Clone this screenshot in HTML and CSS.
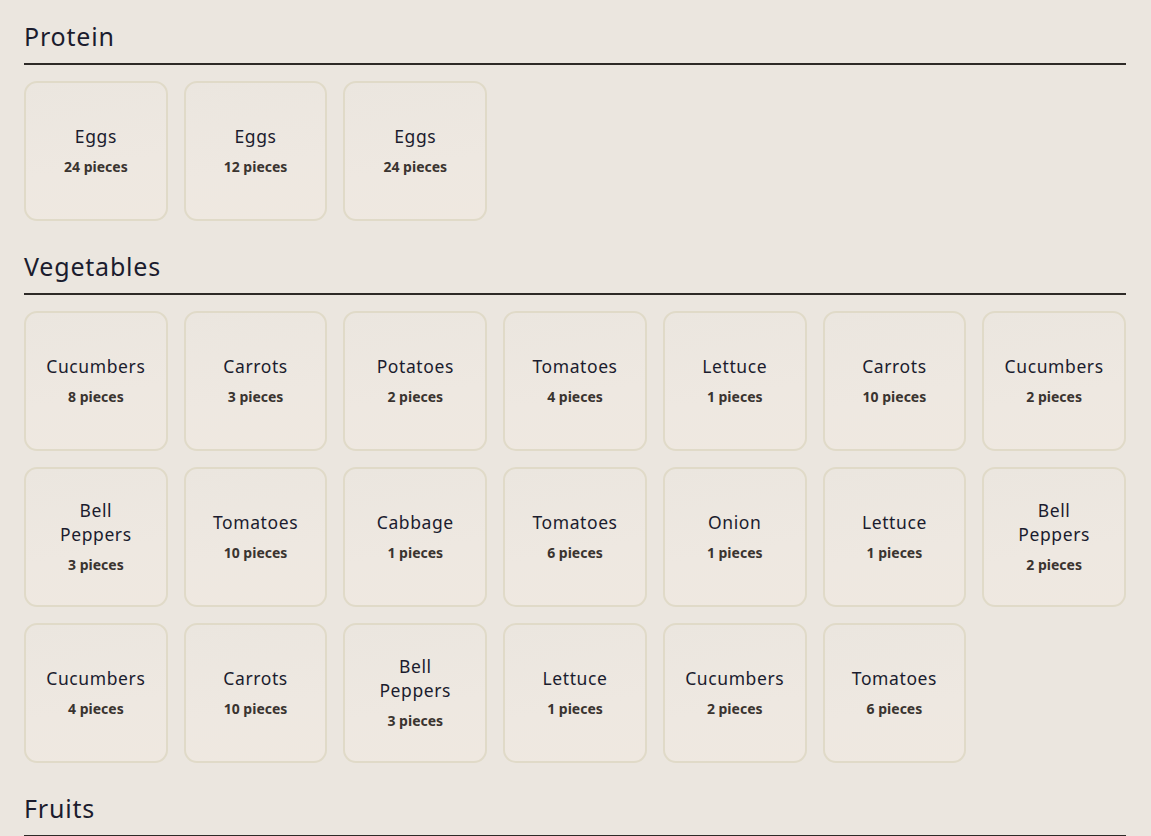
FILE: index.html
```html
<!DOCTYPE html>
<html lang="en">
<head>
<meta charset="utf-8">
<title>Pantry</title>
<link rel="stylesheet" href="styles.css">
</head>
<body>
<main class="pantry">
  <section class="category">
    <h2 class="category-title">Protein</h2>
    <div class="grid">
      <div class="card"><div class="name">Eggs</div><div class="qty">24 pieces</div></div>
      <div class="card"><div class="name">Eggs</div><div class="qty">12 pieces</div></div>
      <div class="card"><div class="name">Eggs</div><div class="qty">24 pieces</div></div>
    </div>
  </section>
  <section class="category">
    <h2 class="category-title">Vegetables</h2>
    <div class="grid">
      <div class="card"><div class="name">Cucumbers</div><div class="qty">8 pieces</div></div>
      <div class="card"><div class="name">Carrots</div><div class="qty">3 pieces</div></div>
      <div class="card"><div class="name">Potatoes</div><div class="qty">2 pieces</div></div>
      <div class="card"><div class="name">Tomatoes</div><div class="qty">4 pieces</div></div>
      <div class="card"><div class="name">Lettuce</div><div class="qty">1 pieces</div></div>
      <div class="card"><div class="name">Carrots</div><div class="qty">10 pieces</div></div>
      <div class="card"><div class="name">Cucumbers</div><div class="qty">2 pieces</div></div>
      <div class="card"><div class="name">Bell Peppers</div><div class="qty">3 pieces</div></div>
      <div class="card"><div class="name">Tomatoes</div><div class="qty">10 pieces</div></div>
      <div class="card"><div class="name">Cabbage</div><div class="qty">1 pieces</div></div>
      <div class="card"><div class="name">Tomatoes</div><div class="qty">6 pieces</div></div>
      <div class="card"><div class="name">Onion</div><div class="qty">1 pieces</div></div>
      <div class="card"><div class="name">Lettuce</div><div class="qty">1 pieces</div></div>
      <div class="card"><div class="name">Bell Peppers</div><div class="qty">2 pieces</div></div>
      <div class="card"><div class="name">Cucumbers</div><div class="qty">4 pieces</div></div>
      <div class="card"><div class="name">Carrots</div><div class="qty">10 pieces</div></div>
      <div class="card"><div class="name">Bell Peppers</div><div class="qty">3 pieces</div></div>
      <div class="card"><div class="name">Lettuce</div><div class="qty">1 pieces</div></div>
      <div class="card"><div class="name">Cucumbers</div><div class="qty">2 pieces</div></div>
      <div class="card"><div class="name">Tomatoes</div><div class="qty">6 pieces</div></div>
    </div>
  </section>
  <section class="category">
    <h2 class="category-title">Fruits</h2>
  </section>
</main>
</body>
</html>
```
FILE: styles.css
```css
* { box-sizing: border-box; }

html, body {
  margin: 0;
  padding: 0;
  background: #ebe6df;
}

body {
  font-family: "Noto Sans", "DejaVu Sans", sans-serif;
  color: #1b1c2e;
}

.pantry {
  padding: 23px 25px 24px 24px;
  display: flex;
  flex-direction: column;
  gap: 32px;
}

.category-title {
  margin: 0 0 16px 0;
  font-size: 25px;
  line-height: 26px;
  font-weight: 400;
  letter-spacing: 0.8px;
  padding-bottom: 14px;
  border-bottom: 2px solid #2e2a27;
  color: #1b1c2e;
}

.grid {
  display: grid;
  grid-template-columns: repeat(7, 1fr);
  gap: 16px;
}

.card {
  height: 140px;
  border: 2px solid #e0dac8;
  border-radius: 13px;
  background: linear-gradient(170deg, #ebe6df 0%, #eee8e1 60%, #efe8e0 100%);
  display: flex;
  flex-direction: column;
  align-items: center;
  justify-content: center;
  text-align: center;
  padding: 0 18px 2px;
}

.name {
  font-size: 17.5px;
  line-height: 24px;
  letter-spacing: 0.6px;
  color: #1b1c2e;
}

.qty {
  margin-top: 10px;
  font-size: 14px;
  line-height: 18px;
  font-weight: 700;
  color: #3a3430;
}
```
